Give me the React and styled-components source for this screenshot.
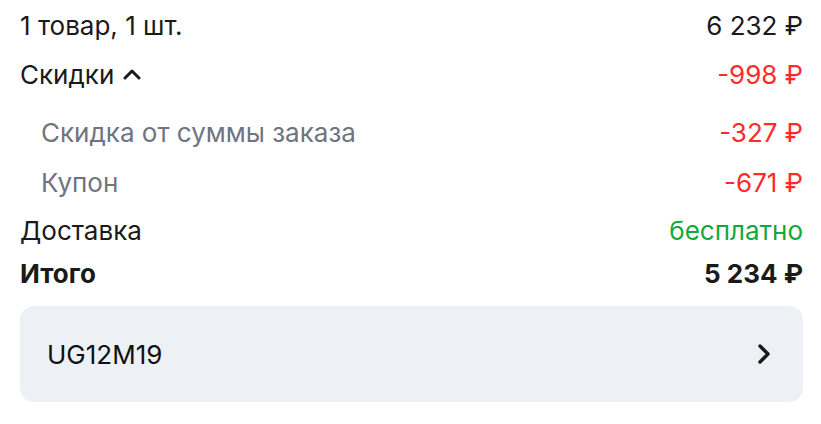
import React from 'react'
import styled, { createGlobalStyle } from 'styled-components'

const Global = createGlobalStyle`
  body {
    margin: 0;
    background: #fff;
    font-family: Inter, "Noto Sans", sans-serif;
    color: #1a1a1a;
  }
`

const Summary = styled.div`
  width: 783px;
  padding: 10px 18px 0 20px;
  display: flex;
  flex-direction: column;
`

const Row = styled.div`
  display: flex;
  justify-content: space-between;
  align-items: center;
  height: 30px;
  margin-top: ${({ $gap }) => $gap || 0}px;
  padding-left: ${({ $indent }) => ($indent ? '21px' : '0')};
  font-size: 26px;
  font-weight: ${({ $bold }) => ($bold ? 700 : 400)};
`

const Label = styled.span`
  display: flex;
  align-items: center;
  gap: 9px;
  color: ${({ $muted }) => ($muted ? '#6e7480' : '#1a1a1a')};
`

const Value = styled.span`
  color: ${({ $tone }) =>
    $tone === 'red' ? '#ff2b2b' : $tone === 'green' ? '#14a83b' : '#1a1a1a'};
`

const Coupon = styled.button`
  margin-top: 18px;
  height: 96px;
  border: none;
  border-radius: 14px;
  background: #edf0f5;
  display: flex;
  align-items: center;
  justify-content: space-between;
  padding: 0 32px 0 27px;
  font-family: inherit;
  font-size: 26px;
  color: #111;
  cursor: pointer;
`

const Up = () => (
  <svg width="18" height="12" viewBox="0 0 18 12" fill="none">
    <path d="M2 10 L9 3 L16 10" stroke="#1a1a1a" strokeWidth="3" strokeLinecap="round" strokeLinejoin="round" />
  </svg>
)

const Right = () => (
  <svg width="14" height="22" viewBox="0 0 14 22" fill="none">
    <path d="M3 3 L11 11 L3 19" stroke="#1a1a1a" strokeWidth="3.4" strokeLinecap="round" strokeLinejoin="round" />
  </svg>
)

export default function App() {
  return (
    <>
      <Global />
      <Summary>
        <Row>
          <Label>1 товар, 1 шт.</Label>
          <Value>6 232 ₽</Value>
        </Row>
        <Row $gap={19}>
          <Label>Скидки <Up /></Label>
          <Value $tone="red">-998 ₽</Value>
        </Row>
        <Row $gap={28} $indent>
          <Label $muted>Скидка от суммы заказа</Label>
          <Value $tone="red">-327 ₽</Value>
        </Row>
        <Row $gap={20} $indent>
          <Label $muted>Купон</Label>
          <Value $tone="red">-671 ₽</Value>
        </Row>
        <Row $gap={18}>
          <Label>Доставка</Label>
          <Value $tone="green">бесплатно</Value>
        </Row>
        <Row $gap={13} $bold>
          <Label>Итого</Label>
          <Value>5 234 ₽</Value>
        </Row>
        <Coupon>
          UG12M19
          <Right />
        </Coupon>
      </Summary>
    </>
  )
}
